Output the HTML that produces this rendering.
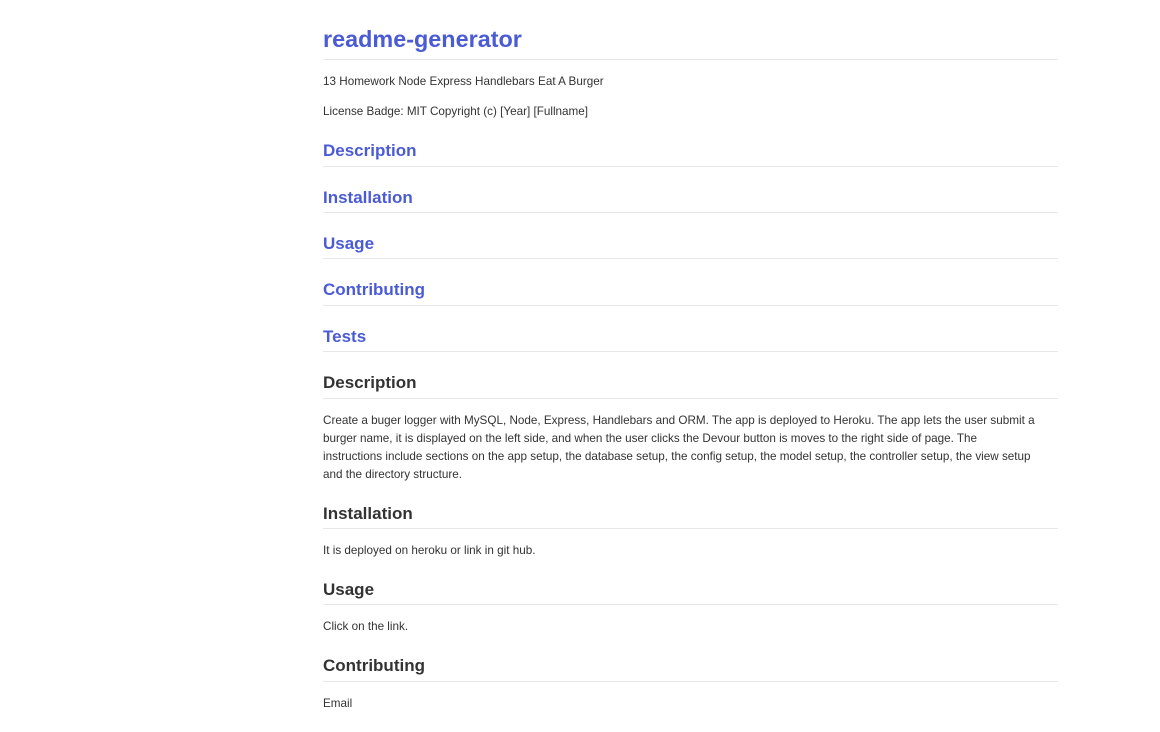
<!DOCTYPE html>
<html><head><meta charset="utf-8"><style>
body{margin:0;background:#fff;font-family:"Liberation Sans",sans-serif;color:#333;}
.a{position:absolute;left:323px;white-space:nowrap;}
.h1{font-size:23.4px;font-weight:bold;color:#4a5bd3;}
.h2{font-size:17px;font-weight:bold;}
.l{color:#4a5bd3;}
.d{color:#333;}
.p{font-size:11.7px;line-height:18px;}
.hr{position:absolute;left:323px;width:735px;height:1px;background:#e8e8e8;}
</style></head><body>
<div class="a h1" style="top:26px">readme-generator</div><div class="hr" style="top:59px"></div>
<div class="a p" style="top:73px">13 Homework Node Express Handlebars Eat A Burger</div>
<div class="a p" style="top:103px">License Badge: MIT Copyright (c) [Year] [Fullname]</div>
<div class="a h2 l" style="top:141px">Description</div><div class="hr" style="top:166px"></div>
<div class="a h2 l" style="top:188px">Installation</div><div class="hr" style="top:212px"></div>
<div class="a h2 l" style="top:234px">Usage</div><div class="hr" style="top:258px"></div>
<div class="a h2 l" style="top:280px">Contributing</div><div class="hr" style="top:305px"></div>
<div class="a h2 l" style="top:327px">Tests</div><div class="hr" style="top:351px"></div>
<div class="a h2 d" style="top:373px">Description</div><div class="hr" style="top:398px"></div>
<div class="a p" style="top:412px">Create a buger logger with MySQL, Node, Express, Handlebars and ORM. The app is deployed to Heroku. The app lets the user submit a<br>burger name, it is displayed on the left side, and when the user clicks the Devour button is moves to the right side of page. The<br>instructions include sections on the app setup, the database setup, the config setup, the model setup, the controller setup, the view setup<br>and the directory structure.</div>
<div class="a h2 d" style="top:504px">Installation</div><div class="hr" style="top:528px"></div>
<div class="a p" style="top:542px">It is deployed on heroku or link in git hub.</div>
<div class="a h2 d" style="top:580px">Usage</div><div class="hr" style="top:604px"></div>
<div class="a p" style="top:618px">Click on the link.</div>
<div class="a h2 d" style="top:656px">Contributing</div><div class="hr" style="top:681px"></div>
<div class="a p" style="top:695px">Email</div>
</body></html>
